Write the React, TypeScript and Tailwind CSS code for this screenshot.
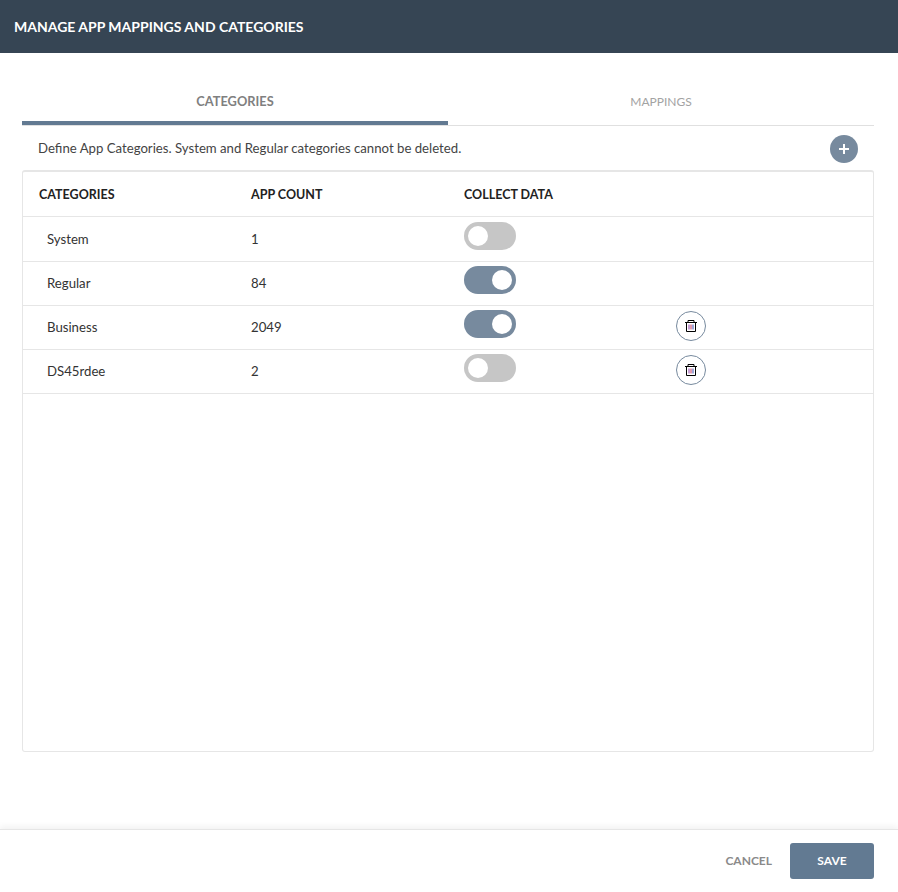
const ROWS = [
  { name: "System", count: "1", on: false, removable: false, height: "h-[45px]", togglePad: "pb-1.5" },
  { name: "Regular", count: "84", on: true, removable: false, height: "h-11", togglePad: "pb-[7px]" },
  { name: "Business", count: "2049", on: true, removable: true, height: "h-11", togglePad: "pb-[7px]" },
  { name: "DS45rdee", count: "2", on: false, removable: true, height: "h-11", togglePad: "pb-[7px]" },
];

function Toggle({ on }: { on: boolean }) {
  return (
    <div
      className={`flex h-7 w-[52px] items-center rounded-full px-1 ${
        on ? "justify-end bg-[#778a9e]" : "justify-start bg-[#c6c6c6]"
      }`}
    >
      <div className="h-5 w-5 rounded-full bg-white" />
    </div>
  );
}

function TrashIcon() {
  return (
    <svg width="12" height="12" viewBox="0 0 12 12" fill="none" strokeWidth="1">
      <path d="M0 2.5h12" stroke="#000" />
      <path d="M3 2.5V0.5h6v2" stroke="#000" />
      <path d="M1.5 2.5v9h9v-9" stroke="#000" />
      <path d="M4 4.5v5" stroke="#8e3fa8" />
      <path d="M6 4.5v5" stroke="#c2365a" />
      <path d="M8 4.5v5" stroke="#3a4fb0" />
    </svg>
  );
}

export default function App() {
  return (
    <div className="flex h-[892px] w-[898px] flex-col bg-white font-['Lato',sans-serif] text-[13.2px] text-[#333]">
      {/* Header */}
      <div className="flex h-[53px] items-center bg-[#364554] pl-3.5 text-[14px] font-bold text-white">
        MANAGE APP MAPPINGS AND CATEGORIES
      </div>

      <div className="flex flex-1 flex-col pl-[22px] pr-6 pt-[28px]">
        {/* Tabs */}
        <div className="flex h-[45px] border-b border-[#e0e0e0] text-xs">
          <div className="flex h-[44px] w-[426px] items-center justify-center border-b-4 border-[#627a92] pt-0.5 text-[12.8px] font-bold text-[#808080]">
            CATEGORIES
          </div>
          <div className="flex h-[44px] flex-1 items-center justify-center pb-[3px] text-[#a3a3a3]">
            MAPPINGS
          </div>
        </div>

        {/* Description */}
        <div className="flex h-11 items-center justify-between pl-4 pr-4 pt-px text-[#444]">
          <span>Define App Categories. System and Regular categories cannot be deleted.</span>
          <button className="flex h-7 w-7 items-center justify-center rounded-full bg-[#778a9e]">
            <svg width="12" height="12" viewBox="0 0 12 12" stroke="#fff" strokeWidth="2">
              <path d="M6 1v10M1 6h10" />
            </svg>
          </button>
        </div>

        {/* Table */}
        <div className="h-[582px] rounded-[3px] border border-t-2 border-[#e6e6e6]">
          <div className="flex h-[45px] items-center border-b border-[#e6e6e6] pt-0.5 text-[12.5px] font-bold text-[#222]">
            <div className="w-[228px] pl-4">CATEGORIES</div>
            <div className="w-[213px]">APP COUNT</div>
            <div>COLLECT DATA</div>
          </div>
          {ROWS.map((row) => (
            <div key={row.name} className={`flex items-center border-b border-[#e6e6e6] ${row.height}`}>
              <div className="w-[228px] pl-6 pt-px">{row.name}</div>
              <div className="w-[213px] pt-px">{row.count}</div>
              <div className={`w-[212px] ${row.togglePad}`}>
                <Toggle on={row.on} />
              </div>
              {row.removable && (
                <button className="mb-[3px] flex h-[30px] w-[30px] items-center justify-center rounded-full border border-[#778a9e]">
                  <TrashIcon />
                </button>
              )}
            </div>
          ))}
        </div>
      </div>

      {/* Footer */}
      <div className="flex h-[63px] items-center justify-end border-t border-[#e6e6e6] pr-6 text-xs font-bold shadow-[0_-3px_6px_rgba(0,0,0,0.05)]">
        <button className="mr-[18px] text-[#8a8a8a]">CANCEL</button>
        <button className="h-9 w-[84px] rounded-[3px] bg-[#627a92] text-white">SAVE</button>
      </div>
    </div>
  );
}
